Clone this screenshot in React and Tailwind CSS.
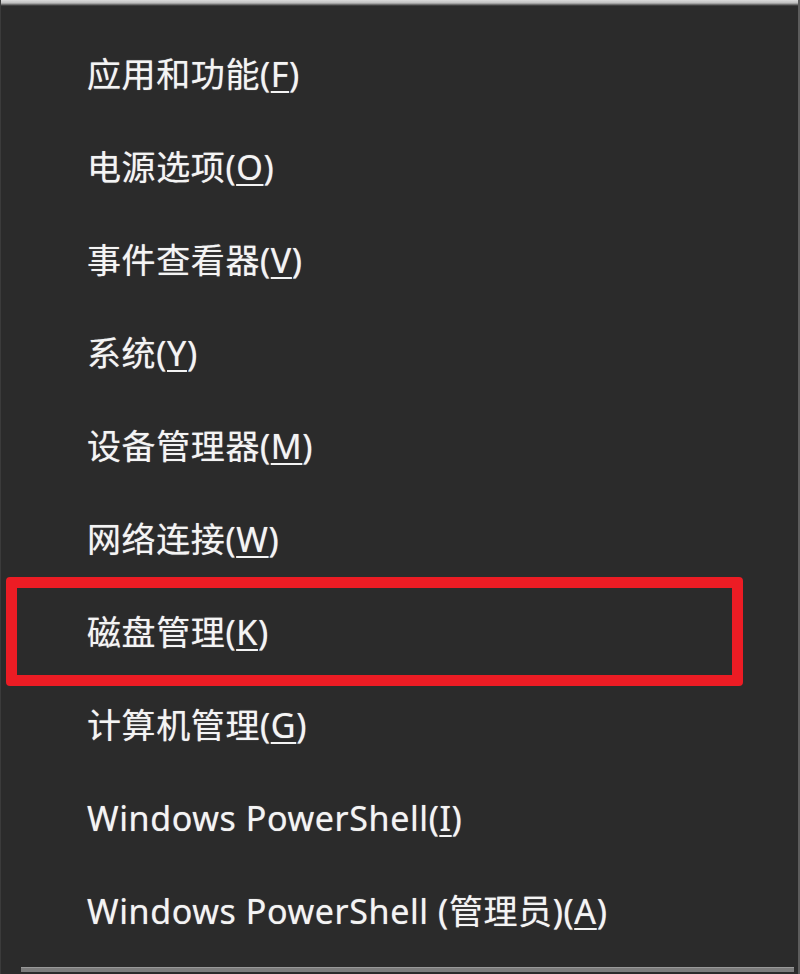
import React from "react";

const items = [
  ["应用和功能", "F"],
  ["电源选项", "O"],
  ["事件查看器", "V"],
  ["系统", "Y"],
  ["设备管理器", "M"],
  ["网络连接", "W"],
  ["磁盘管理", "K", true],
  ["计算机管理", "G"],
  ["Windows PowerShell", "I"],
  ["Windows PowerShell (管理员)", "A"],
];

export default function App() {
  return (
    <div
      className="relative w-[800px] h-[974px] bg-[#2b2b2b] flex flex-col border-l border-[#3b3b3b] border-r-2 border-r-[#5c5c5c] overflow-hidden"
      style={{ fontFamily: '"Noto Sans", "Noto Sans CJK SC", sans-serif' }}
    >
      <div className="h-[6px] w-full bg-gradient-to-b from-[#dcdcdc] via-[#bdbdbd] to-[#2b2b2b] shrink-0" />
      <div className="flex flex-col pt-[21px]">
        {items.map(([label, key, hl]) => (
          <div key={label} className="relative h-[93px] flex items-center pl-[86px]">
            {hl && (
              <div className="absolute left-[5px] w-[737px] top-[-8px] bottom-[-8px] border-[11px] border-[#ec1c24] rounded-[4px]" />
            )}
            <span className="text-[34px] leading-none text-[#f4f4f4] tracking-[0.6px] [text-shadow:0_0_1px_rgba(255,255,255,0.6)]">
              {label}(<span className="underline underline-offset-[4px] decoration-[2px]">{key}</span>)
            </span>
          </div>
        ))}
      </div>
      <div className="mt-auto mb-[2px] ml-[20px] mr-[4px] h-[5px] bg-[#7c7c7c] border-t border-[#999999] shrink-0" />
    </div>
  );
}
